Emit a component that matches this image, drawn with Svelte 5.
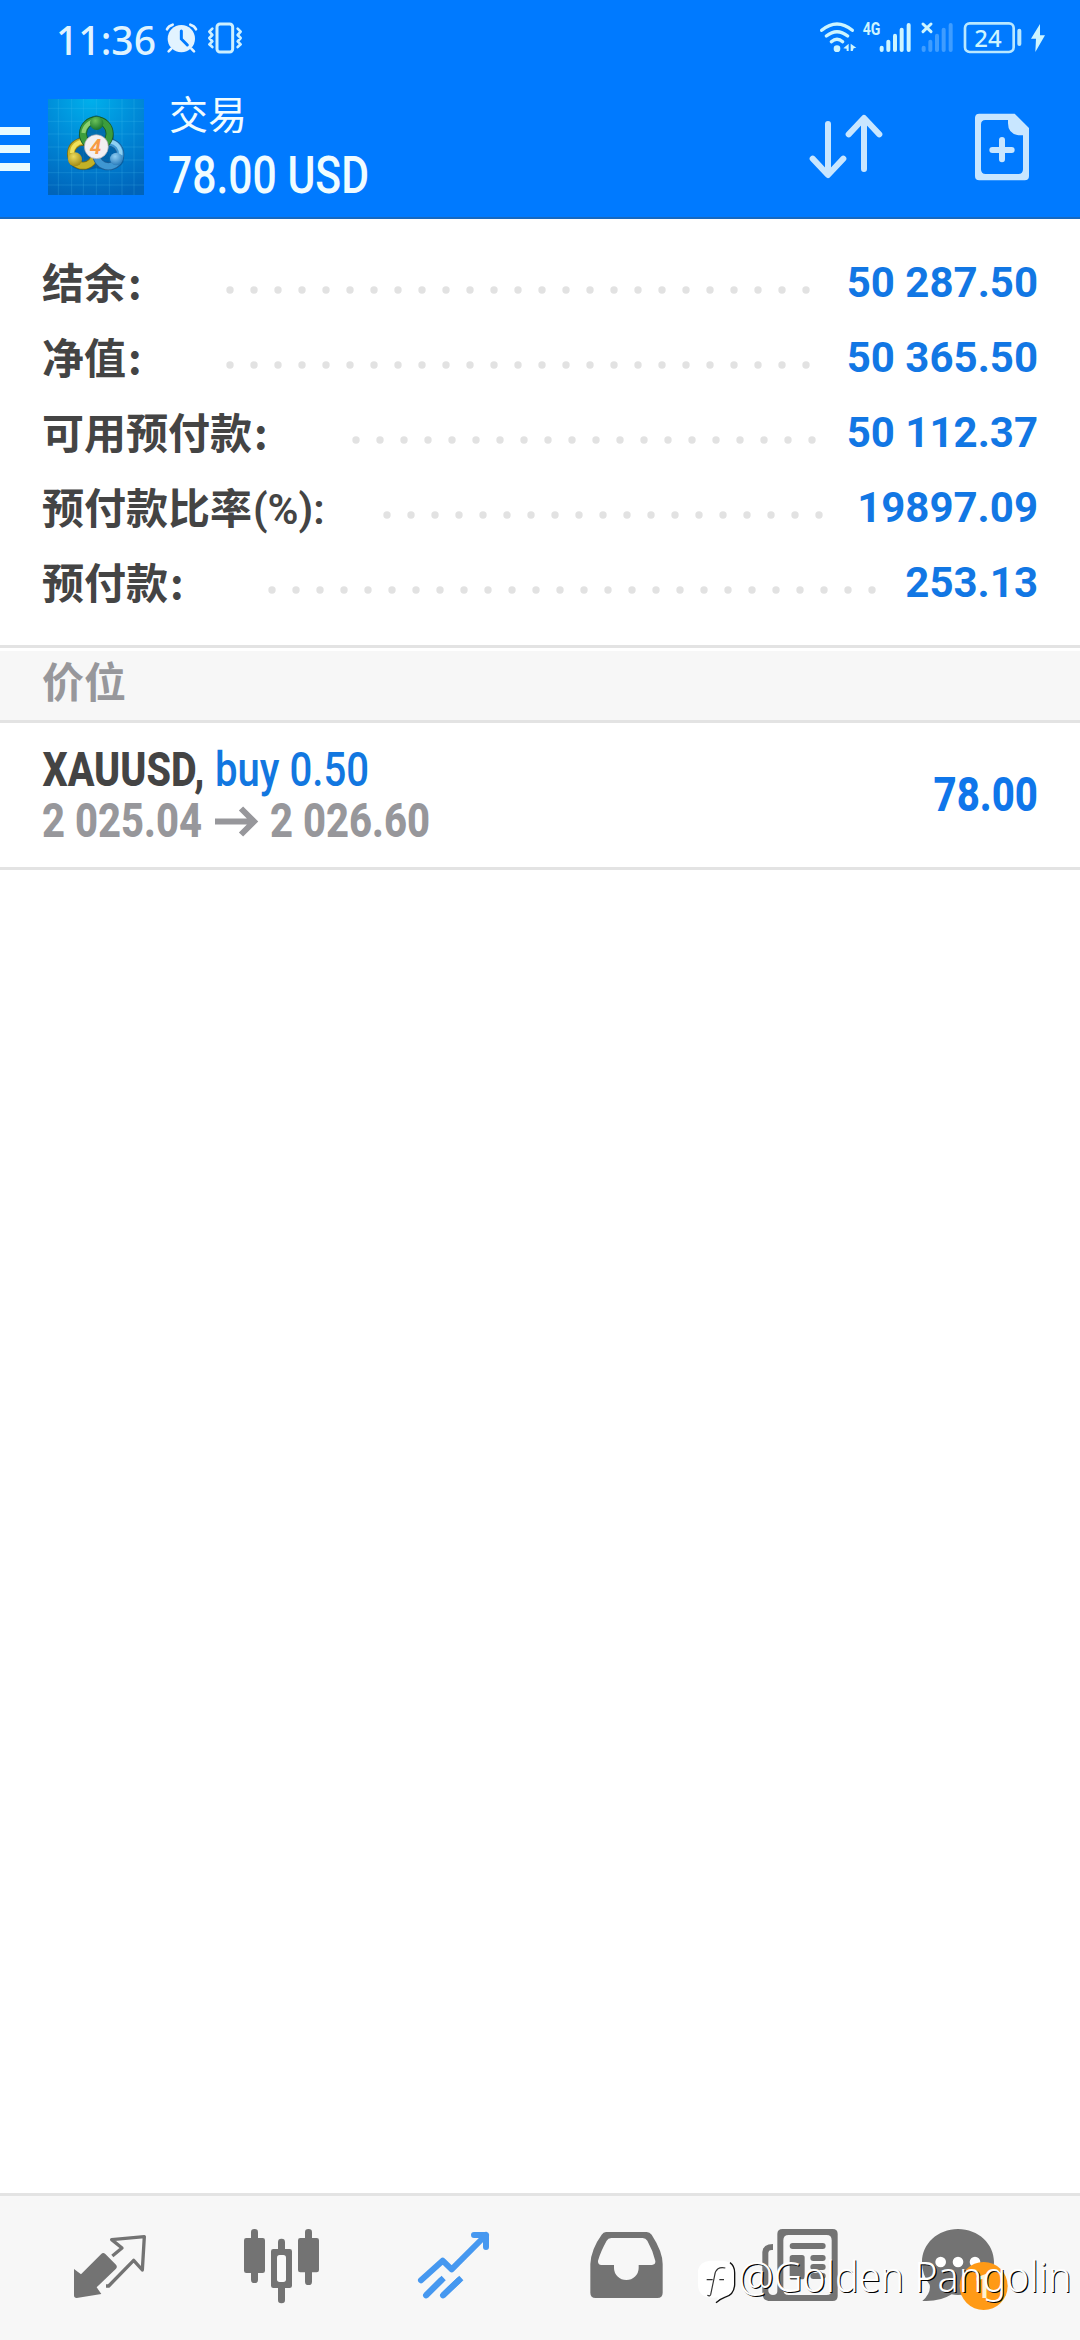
<script>
  const summary = [
    { label: '结余', suffix: ':', dots: 25, lead: 176, value: '50 287.50' },
    { label: '净值', suffix: ':', dots: 25, lead: 176, value: '50 365.50' },
    { label: '可用预付款', suffix: ':', dots: 20, lead: 302, value: '50 112.37' },
    { label: '预付款比率', suffix: '(%):', latin: true, dots: 19, lead: 333, value: '19897.09' },
    { label: '预付款', suffix: ':', dots: 26, lead: 218, value: '253.13' }
  ];
  const bars = [
    [305, 140],
    [325, 122],
    [345, 104],
    [365, 86],
    [386, 72]
  ];
</script>

<main class="screen">
  <header>
    <div class="status">
      <svg class="time" width="98" height="40" viewBox="57 20 98 40">
        <text x="56" y="54.5" textLength="100" lengthAdjust="spacingAndGlyphs">11:36</text>
      </svg>
      <svg class="alarm" width="34" height="40" viewBox="494 60 102 120">
        <circle cx="543" cy="116" r="41" fill="#e2f3ff" />
        <path d="M500 88Q504 78 517 74M587 88Q583 78 570 74M513 146l-8 8M573 146l8 8" stroke="#e2f3ff" stroke-width="8" fill="none" stroke-linecap="round" />
        <path d="M543 93v24l18 18" stroke="#007aff" stroke-width="9" fill="none" stroke-linecap="round" />
      </svg>
      <svg class="vibrate" width="38" height="40" viewBox="617 60 114 120">
        <g stroke="#cdf0ff" fill="none" stroke-width="9" stroke-linecap="round" stroke-linejoin="round">
          <rect x="650" y="72" width="47" height="84" rx="9" />
          <path d="M636 86l-9 9 9 10-9 9 9 10-9 9 9 8M712 86l9 9-9 10 9 9-9 10 9 9-9 8" stroke-width="8" />
        </g>
      </svg>
      <div class="spacer"></div>
      <svg class="wifi" width="38" height="40" viewBox="117 60 114 120">
        <g stroke="#cdf5ff" fill="none" stroke-width="10" stroke-linecap="round">
          <path d="M125 91Q171 53 217 91M139 108Q171 82 203 108M154 125Q171 110 188 125" />
        </g>
        <circle cx="171" cy="146" r="10" fill="#cdf5ff" />
        <path d="M206 131v22h-6v-7l-10-1zM212 131l17 12-8 2-3 8h-6z" fill="#cdf5ff" />
      </svg>
      <svg class="cell" width="50" height="40" viewBox="246 60 150 120">
        <text class="net" x="248" y="106" textLength="53" lengthAdjust="spacingAndGlyphs">4G</text>
        {#each bars as [x, y]}
          <path d="M{x} {y + 3}V150" stroke="#cdf5ff" stroke-width="12" stroke-linecap="round" />
        {/each}
      </svg>
      <svg class="cell2" width="34" height="40" viewBox="420 60 102 120">
        {#each bars as [x, y]}
          <path d="M{x + 126} {y + 3}V150" stroke="#3f9dff" stroke-width="12" stroke-linecap="round" />
        {/each}
        <path d="M429 72l24 23M453 72l-24 23" stroke="#cdf5ff" stroke-width="9" stroke-linecap="round" />
      </svg>
      <svg class="battery" width="60" height="40" viewBox="550 60 180 120">
        <rect x="556" y="70" width="146" height="86" rx="14" fill="none" stroke="#b9e8ff" stroke-width="8" />
        <path d="M719 92v40" stroke="#b9e8ff" stroke-width="12" stroke-linecap="round" />
        <text class="pct" x="584" y="140" textLength="82" lengthAdjust="spacingAndGlyphs">24</text>
      </svg>
      <svg class="bolt" width="16" height="40" viewBox="749 60 48 120">
        <path d="M779 72l-27 44h15l-2 40 29-50h-15z" fill="#cdf5ff" />
      </svg>
    </div>

    <div class="bar">
      <svg width="30" height="96" viewBox="0 99 30 96">
        <path d="M0 127h30v8H0zM0 145h30v8H0zM0 163h30v8H0z" fill="#e8fbff" />
      </svg>
      <svg class="logo" width="96" height="96" viewBox="0 0 288 288">
        <defs>
          <radialGradient id="sky" cx=".45" cy="0" r="1.05">
            <stop offset="0" stop-color="#00b0ec" />
            <stop offset=".55" stop-color="#0084d4" />
            <stop offset="1" stop-color="#0064ba" />
          </radialGradient>
          <radialGradient id="leaf" cx=".4" cy=".3" r=".8"><stop offset="0" stop-color="#6cc25a" /><stop offset="1" stop-color="#0f6d26" /></radialGradient>
          <radialGradient id="gold" cx=".4" cy=".3" r=".8"><stop offset="0" stop-color="#eadb5c" /><stop offset="1" stop-color="#9a800c" /></radialGradient>
          <radialGradient id="sea" cx=".4" cy=".3" r=".8"><stop offset="0" stop-color="#8fcdf2" /><stop offset="1" stop-color="#1d72b5" /></radialGradient>
        </defs>
        <rect width="288" height="288" fill="url(#sky)" />
        <path d="M31 0v288M71 0v288M106 0v288M145 0v288M184 0v288M222 0v288M258 0v288M0 28h288M0 67h288M0 105h288M0 144h288M0 183h288M0 221h288M0 258h288" stroke="#51c8f4" stroke-opacity=".2" stroke-width="3" />
        <path d="M145 48Q200 66 198 124Q234 152 226 190Q210 222 144 208Q80 226 62 190Q56 136 92 116Q92 64 145 48z" fill="#003f78" opacity=".45" />
        <g fill="none">
          <circle cx="105" cy="164" r="36" stroke="#7b6d12" stroke-width="24" />
          <circle cx="105" cy="164" r="36" stroke="#c3b127" stroke-width="19" />
          <path d="M72 162A34 34 0 0 1 106 128" stroke="#f0e25c" stroke-width="12" />
          <circle cx="181" cy="166" r="36" stroke="#1b5e97" stroke-width="24" />
          <circle cx="181" cy="166" r="36" stroke="#3f97d2" stroke-width="19" />
          <path d="M186 128A36 36 0 0 1 218 168" stroke="#8fd0f2" stroke-width="11" />
          <circle cx="145" cy="104" r="40" stroke="#185c26" stroke-width="24" />
          <circle cx="145" cy="104" r="40" stroke="#3c9d3d" stroke-width="19" />
          <path d="M106 102A40 40 0 0 1 146 66" stroke="#8bd070" stroke-width="12" />
        </g>
        <circle cx="146" cy="73" r="20" fill="url(#leaf)" />
        <circle cx="81" cy="181" r="21" fill="url(#gold)" />
        <circle cx="205" cy="180" r="19" fill="url(#sea)" />
        <circle cx="145" cy="143" r="36" fill="#f2eff2" stroke="#a9a6ad" stroke-width="2" />
        <text class="four" x="125" y="166">4</text>
      </svg>
      <div class="titles">
        <h1>交易</h1>
        <svg width="202" height="44" viewBox="167 153 202 44">
          <text class="cond total" x="168" y="193" textLength="201" lengthAdjust="spacingAndGlyphs">78.00 USD</text>
        </svg>
      </div>
      <svg class="sort" width="76" height="96" viewBox="84 297 228 288">
        <path d="M144 372v152M98 476l46 49 46-49M252 507V355M206 403l46-49 46 49" fill="none" stroke="#c8e6ff" stroke-width="18" stroke-linecap="round" stroke-linejoin="round" />
      </svg>
      <svg class="doc" width="54" height="96" viewBox="585 297 162 288">
        <path fill-rule="evenodd" d="M597 341H704L747 384V528Q747 541 734 541H598Q585 541 585 528V354Q585 341 598 341zM616 360Q603 360 603 374V508Q603 522 617 522H715Q729 522 729 508V406H716Q684 402 684 370V360z" fill="#c8e6ff" />
        <path d="M666 420v58M637 450h58" stroke="#c8e6ff" stroke-width="18" stroke-linecap="round" />
      </svg>
    </div>
  </header>

  <section class="summary">
    {#each summary as row}
      <div class="row">
        <div class="label" style:width="{row.lead}px">{row.label}<span class:latin={row.latin} class="suffix">{row.suffix}</span></div>
        <svg class="dots" width={row.dots * 24} height="8">
          {#each Array(row.dots) as _, i}
            <circle cx={12 + i * 24} cy="4" r="3.7" />
          {/each}
        </svg>
        <div class="value">{row.value}</div>
      </div>
    {/each}
  </section>

  <h2>价位</h2>

  <section class="position">
    <div class="deal">
      <svg width="340" height="48" viewBox="42 746 340 48">
        <text class="cond bold dark" x="42.5" y="786" textLength="162" lengthAdjust="spacingAndGlyphs">XAUUSD,</text>
        <text class="cond blue" x="215" y="786" textLength="154" lengthAdjust="spacingAndGlyphs">buy 0.50</text>
      </svg>
      <svg width="400" height="48" viewBox="42 794 400 48">
        <text class="cond bold grey" x="42" y="837" textLength="160" lengthAdjust="spacingAndGlyphs">2 025.04</text>
        <path d="M215 821.5h39M241 808.5l13 13-13 13" fill="none" stroke="#97979b" stroke-width="6" />
        <text class="cond bold grey" x="270" y="837" textLength="160" lengthAdjust="spacingAndGlyphs">2 026.60</text>
      </svg>
    </div>
    <svg width="106" height="48" viewBox="933 770 106 48">
      <text class="cond bold profit" x="933.5" y="811" textLength="104.5" lengthAdjust="spacingAndGlyphs">78.00</text>
    </svg>
  </section>

  <div class="empty"></div>

  <nav>
    <svg viewBox="72 48 516 432">
      <path d="M222 267L243 283L303 223Q309 216 316 222L348 254Q353 260 348 266L290 322L304 342L230 354Q222 354 222 346z" fill="#737373" />
      <path d="M337 228L366 204L335 179L433 170L427 270L401 241L326 318H318" fill="none" stroke="#737373" stroke-width="10" stroke-linejoin="round" />
    </svg>
    <svg viewBox="588 48 516 432">
      <g fill="#737373">
        <rect x="753" y="147" width="21" height="162" rx="10" /><rect x="732" y="174" width="63" height="105" rx="7" />
        <rect x="915" y="147" width="21" height="168" rx="10" /><rect x="894" y="174" width="63" height="103" rx="7" />
        <rect x="834" y="176" width="21" height="194" rx="10" /><rect x="813" y="207" width="63" height="117" rx="7" />
      </g>
      <rect x="831" y="225" width="27" height="81" rx="8" fill="#fafafa" />
    </svg>
    <svg viewBox="24 48 516 432">
      <g fill="none" stroke="#4698f0" stroke-width="18" stroke-linecap="round" stroke-linejoin="round">
        <path d="M183 301L248 242L275 268L378 165M342 165H378V201" />
        <path d="M198 346L251 294M249 346L304 294" stroke-linecap="butt" />
        <path d="M198 346L243 301M249 346L296 301" />
      </g>
    </svg>
    <svg viewBox="540 48 516 432">
      <path fill-rule="evenodd" fill="#737373" d="M738 156H860Q869 156 875 164Q908 215 908 252V338Q908 354 892 354H707Q691 354 691 338V252Q693 208 725 164Q730 156 738 156zM754 174Q744 174 740 182Q722 214 714 242Q713 255 724 255H762V264A37 36 0 0 0 836 264V255H876Q887 254 886 243Q879 212 862 182Q857 174 848 174z" />
    </svg>
    <svg viewBox="96 48 516 432">
      <path fill-rule="evenodd" fill="#737373" d="M308 147H458Q473 147 473 162V348Q473 363 458 363H265Q247 360 247 340V216Q249 192 279 192V210Q265 208 265 220V334Q267 345 279 345Q292 345 292 334V162Q292 147 308 147zM326 165Q310 165 310 181V329Q310 345 326 345H440Q455 345 455 329V181Q455 165 440 165z" />
      <path d="M338 198H428M400 234H428M400 261H428M400 288H428" stroke="#737373" stroke-width="18" stroke-linecap="round" />
      <rect x="329" y="225" width="45" height="73" rx="8" fill="#737373" />
    </svg>
    <svg viewBox="612 48 516 432">
      <path d="M834 147C895 147 942 192 942 246S895 345 834 345Q824 345 815 343Q780 366 727 363Q754 338 749 314Q726 285 726 246C726 192 773 147 834 147z" fill="#737373" />
      <circle cx="782" cy="246" r="16" fill="#fff" /><circle cx="834" cy="246" r="16" fill="#fff" /><circle cx="885" cy="246" r="16" fill="#fff" />
      <circle cx="911" cy="318" r="72" fill="#ff9a16" />
      <text class="badge" x="882" y="354">1</text>
    </svg>
  </nav>

  <svg class="mark" width="390" height="70" viewBox="690 2250 390 70">
    <g transform="translate(690 2250) scale(.33333)">
      <path d="M60 32H100Q134 36 134 66V104Q132 136 104 142Q92 146 80 157L84 142Q50 146 36 134Q24 124 24 102V60Q28 36 60 32z" fill="#fff" />
      <path d="M106 54Q78 48 74 76L62 134Q60 140 52 136M50 89H68M88 89H102" fill="none" stroke="#333" stroke-width="3.5" />
      <path d="M120 38Q134 48 134 68V104Q132 136 104 142Q92 146 78 158" fill="none" stroke="#111" stroke-width="4" />
    </g>
    <text class="handle" x="738.5" y="2291.5" textLength="333" lengthAdjust="spacingAndGlyphs">@Golden Pangolin</text>
  </svg>
</main>

<style>
  :global(body) { background: #fff; }
  .screen {
    position: relative;
    width: 1080px;
    height: 2340px;
    display: flex;
    flex-direction: column;
    overflow: hidden;
    background: #fff;
    font-family: Roboto, "Noto Sans CJK SC", sans-serif;
  }
  svg { display: block; flex: none; overflow: visible; }
  header {
    height: 219px;
    box-sizing: border-box;
    background: #007aff;
    border-bottom: 2px solid #1769c0;
  }
  .status { display: flex; height: 40px; padding: 20px 34.3px 0 57px; }
  .spacer { flex: 1; }
  .time text { font: 500 40px "Noto Sans", sans-serif; fill: #dff3ff; }
  .alarm { margin-left: 9.7px; }
  .vibrate { margin-left: 7px; }
  .cell { margin-left: 5px; }
  .cell2 { margin-left: 8px; }
  .battery { margin-left: 9.3px; }
  .bolt { margin-left: 6.3px; }
  .net { font: 700 54px Roboto, sans-serif; fill: #cdf5ff; }
  .pct { font: 500 73px "Noto Sans", sans-serif; fill: #cdf5ff; }
  .bar { display: flex; padding-top: 39px; height: 96px; }
  .logo { margin-left: 18px; }
  .four { font: italic 700 62px Roboto, sans-serif; fill: #f79a45; }
  .titles { display: flex; flex-direction: column; margin-left: 23px; width: 640px; }
  h1 {
    flex: none;
    margin: -12px 0 8px 2px;
    height: 58px;
    font: 400 39px/50px "Noto Sans CJK SC", sans-serif;
    color: #f0fcff;
  }
  .sort { margin-left: 1px; }
  .doc { margin-left: 91px; }
  .cond { font-family: Roboto, sans-serif; font-size: 48px; }
  .cond.total { font-size: 51px; font-weight: 500; fill: #f0fcff; }
  .cond.bold { font-weight: 800; }
  .dark { fill: #444; }
  .blue { fill: #1277e0; font-weight: 500; }
  .grey { fill: #97979b; }
  .profit { fill: #0f76ea; }
  .summary { padding: 26px 42px 25px; border-bottom: 3px solid #e3e3e3; }
  .row { display: flex; align-items: center; height: 75px; }
  .label {
    flex: none;
    margin-bottom: 4px;
    white-space: nowrap;
    font: 700 42px/60px "Noto Sans CJK SC", sans-serif;
    color: #444;
  }
  .suffix { margin-left: 2px; line-height: 0; }
  .suffix.latin { margin-left: 1px; font-family: Roboto, sans-serif; font-weight: 600; }
  .dots { margin-top: 15px; fill: #e2e2e2; }
  .value {
    margin-left: auto;
    white-space: nowrap;
    font-size: 42px;
    font-weight: 700;
    color: #1277e4;
  }
  h2 {
    margin: 3px 0 0;
    height: 69px;
    padding-left: 42px;
    background: #f7f7f7;
    border-bottom: 3px solid #e3e3e3;
    font: 700 42px/57px "Noto Sans CJK SC", sans-serif;
    color: #97979b;
  }
  .position {
    display: flex;
    justify-content: space-between;
    align-items: center;
    height: 142px;
    padding: 0 41px 2px 42px;
    border-bottom: 3px solid #e3e3e3;
  }
  .empty { flex: 1; }
  nav {
    display: flex;
    height: 144px;
    padding-left: 24px;
    border-top: 3px solid #e3e3e3;
    background: #f7f7f7;
  }
  nav svg { width: 172px; height: 144px; }
  .badge { font: 500 100px Roboto, sans-serif; fill: #fff3d0; }
  .mark { position: absolute; right: 0; bottom: 20px; }
  .handle {
    font: 300 42px "Noto Sans", sans-serif;
    fill: #fff;
    text-shadow: 1.2px 1.2px 0.6px #000;
  }
</style>
